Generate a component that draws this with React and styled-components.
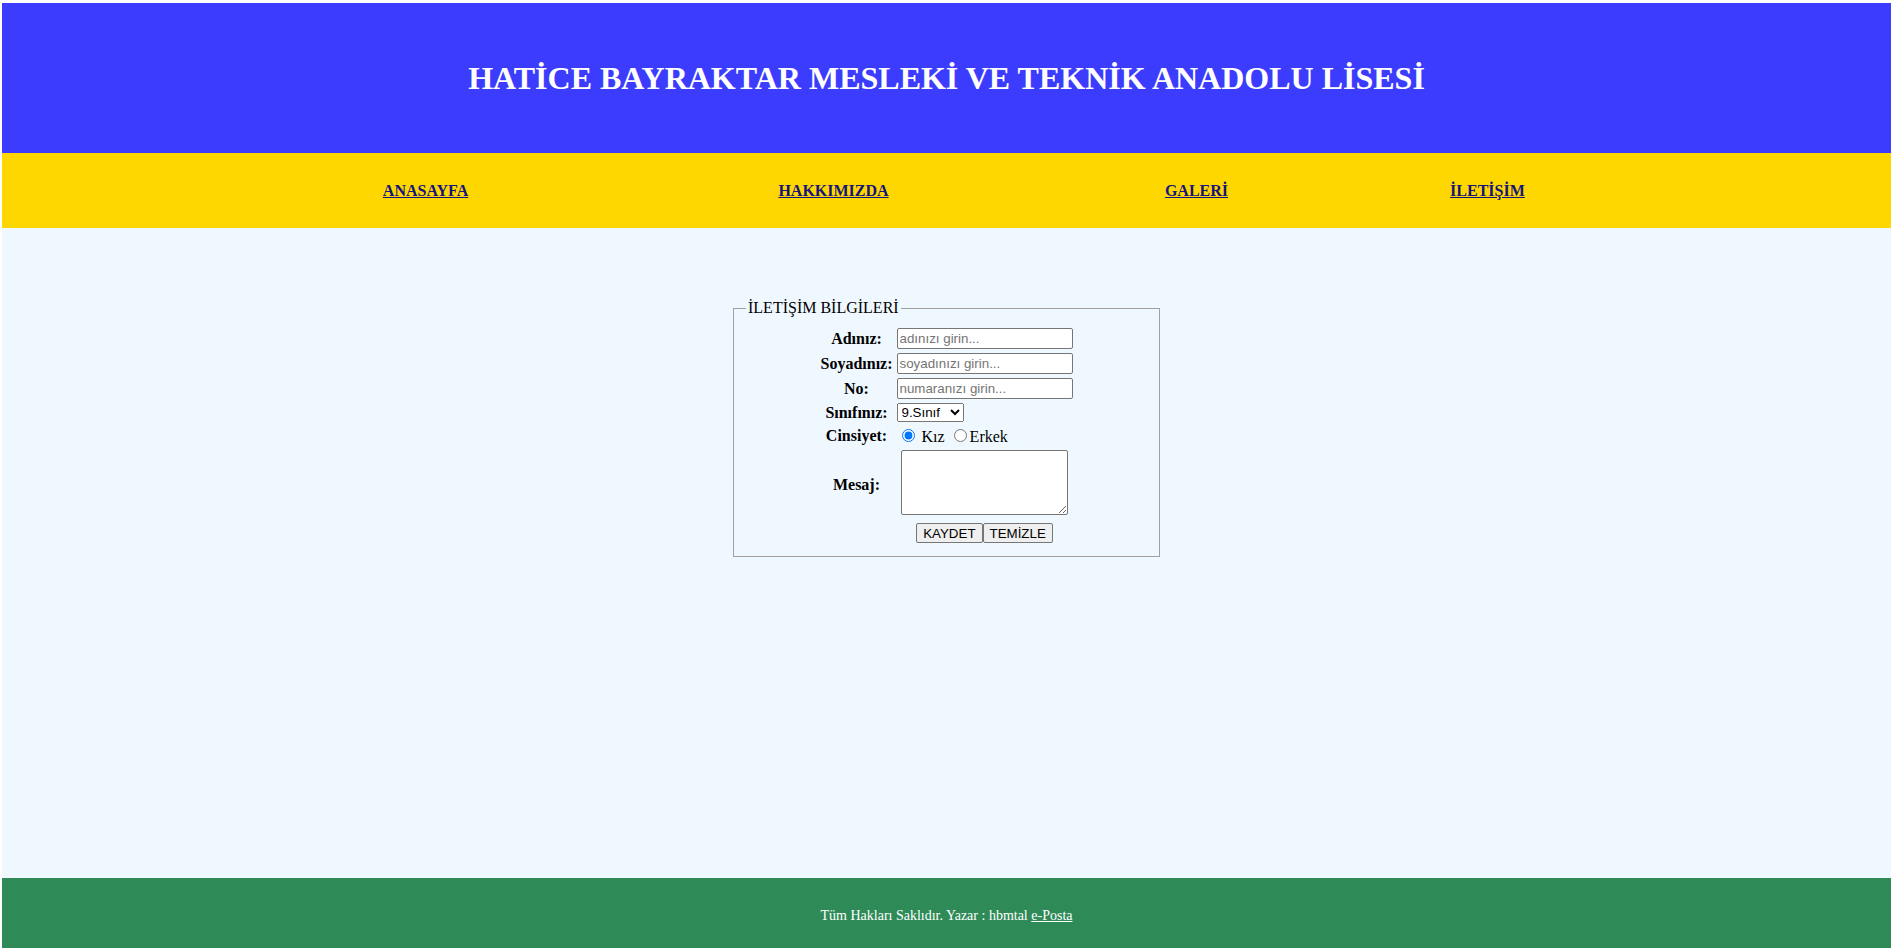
import React from "react";
import styled, { createGlobalStyle } from "styled-components";

const GlobalStyle = createGlobalStyle`
  body {
    margin: 3px 2px 0;
    font-family: "Liberation Serif", "Times New Roman", serif;
    background: #ffffff;
  }
`;

const Header = styled.header`
  display: flex;
  align-items: center;
  justify-content: center;
  height: 150px;
  background: #3c3cff;
`;

const Title = styled.h1`
  margin: 0;
  color: #ffffff;
  font-size: 32px;
  font-weight: bold;
`;

const Nav = styled.nav`
  display: flex;
  align-items: center;
  justify-content: center;
  height: 75px;
  background: #ffd700;
`;

const NavGrid = styled.div`
  display: grid;
  width: 74%;
  grid-template-columns: 356fr 460fr 266fr 316fr;
  justify-items: center;
`;

const NavLink = styled.a`
  color: #14147a;
  font-size: 16px;
  font-weight: bold;
  text-decoration: underline;
`;

const Main = styled.main`
  box-sizing: border-box;
  height: 650px;
  padding-top: 71px;
  background: #f0f8ff;
`;

const Fieldset = styled.fieldset`
  width: 401px;
  margin: 0 auto;
  padding: 8px 12px 10px;
  border: 1px solid #a0a0a0;
`;

const Legend = styled.legend`
  padding: 0 2px;
  font-size: 16px;
`;

const FormTable = styled.table`
  margin: 0 auto;
  border-spacing: 2px;
`;

const Label = styled.th`
  padding: 1px;
  font-size: 16px;
  font-weight: bold;
  text-align: center;
  white-space: nowrap;
`;

const Cell = styled.td`
  padding: 1px;
  font-size: 16px;
  text-align: ${(p) => (p.$center ? "center" : "left")};
  white-space: nowrap;
`;

const TextInput = styled.input`
  box-sizing: border-box;
  width: 176px;
  height: 21px;
  margin: 0;
  padding: 1px 2px;
  border: 1px solid #767676;
  border-radius: 2px;
  font-family: "Liberation Sans", Arial, sans-serif;
  font-size: 13.33px;
  background: #ffffff;

  &::placeholder {
    color: #757575;
  }
`;

const Select = styled.select`
  box-sizing: border-box;
  width: 67px;
  height: 19px;
  margin: 0;
  font-family: "Liberation Sans", Arial, sans-serif;
  font-size: 13.33px;
`;

const Radio = styled.input`
  margin: 3px 3px 0 5px;
`;

const TextArea = styled.textarea`
  box-sizing: border-box;
  width: 167px;
  height: 65px;
  margin: 0;
  border: 1px solid #767676;
  border-radius: 2px;
  font-family: "Liberation Mono", monospace;
  font-size: 13.33px;
`;

const Button = styled.button`
  box-sizing: border-box;
  height: 20px;
  margin: 0;
  padding: 1px 6px;
  border: 1px solid #767676;
  border-radius: 2px;
  background: #efefef;
  color: #000000;
  font-family: "Liberation Sans", Arial, sans-serif;
  font-size: 13.33px;
`;

const Footer = styled.footer`
  display: flex;
  align-items: center;
  justify-content: center;
  box-sizing: border-box;
  height: 70px;
  padding-top: 5px;
  background: #2e8b57;
  color: #ffffff;
  font-size: 14px;
`;

const FooterLink = styled.a`
  color: #ffffff;
  text-decoration: underline;
`;

const links = ["ANASAYFA", "HAKKIMIZDA", "GALERİ", "İLETİŞİM"];

const fields = [
  { label: "Adınız:", placeholder: "adınızı girin..." },
  { label: "Soyadınız:", placeholder: "soyadınızı girin..." },
  { label: "No:", placeholder: "numaranızı girin..." },
];

export default function App() {
  return (
    <>
      <GlobalStyle />
      <Header>
        <Title>HATİCE BAYRAKTAR MESLEKİ VE TEKNİK ANADOLU LİSESİ</Title>
      </Header>
      <Nav>
        <NavGrid>
          {links.map((l) => (
            <NavLink key={l} href="#">
              {l}
            </NavLink>
          ))}
        </NavGrid>
      </Nav>
      <Main>
        <Fieldset>
          <Legend>İLETİŞİM BİLGİLERİ</Legend>
          <FormTable>
            <tbody>
              {fields.map((f) => (
                <tr key={f.label}>
                  <Label>{f.label}</Label>
                  <Cell>
                    <TextInput type="text" placeholder={f.placeholder} />
                  </Cell>
                </tr>
              ))}
              <tr>
                <Label>Sınıfınız:</Label>
                <Cell>
                  <Select defaultValue="9">
                    <option value="9">9.Sınıf</option>
                    <option value="10">10.Sınıf</option>
                    <option value="11">11.Sınıf</option>
                    <option value="12">12.Sınıf</option>
                  </Select>
                </Cell>
              </tr>
              <tr>
                <Label>Cinsiyet:</Label>
                <Cell>
                  <Radio type="radio" name="cinsiyet" defaultChecked /> Kız{" "}
                  <Radio type="radio" name="cinsiyet" />
                  Erkek
                </Cell>
              </tr>
              <tr>
                <Label>Mesaj:</Label>
                <Cell $center>
                  <TextArea />
                </Cell>
              </tr>
              <tr>
                <Label />
                <Cell $center>
                  <Button type="submit">KAYDET</Button>
                  <Button type="reset">TEMİZLE</Button>
                </Cell>
              </tr>
            </tbody>
          </FormTable>
        </Fieldset>
      </Main>
      <Footer>
        <span>
          Tüm Hakları Saklıdır. Yazar : hbmtal <FooterLink href="#">e-Posta</FooterLink>
        </span>
      </Footer>
    </>
  );
}
